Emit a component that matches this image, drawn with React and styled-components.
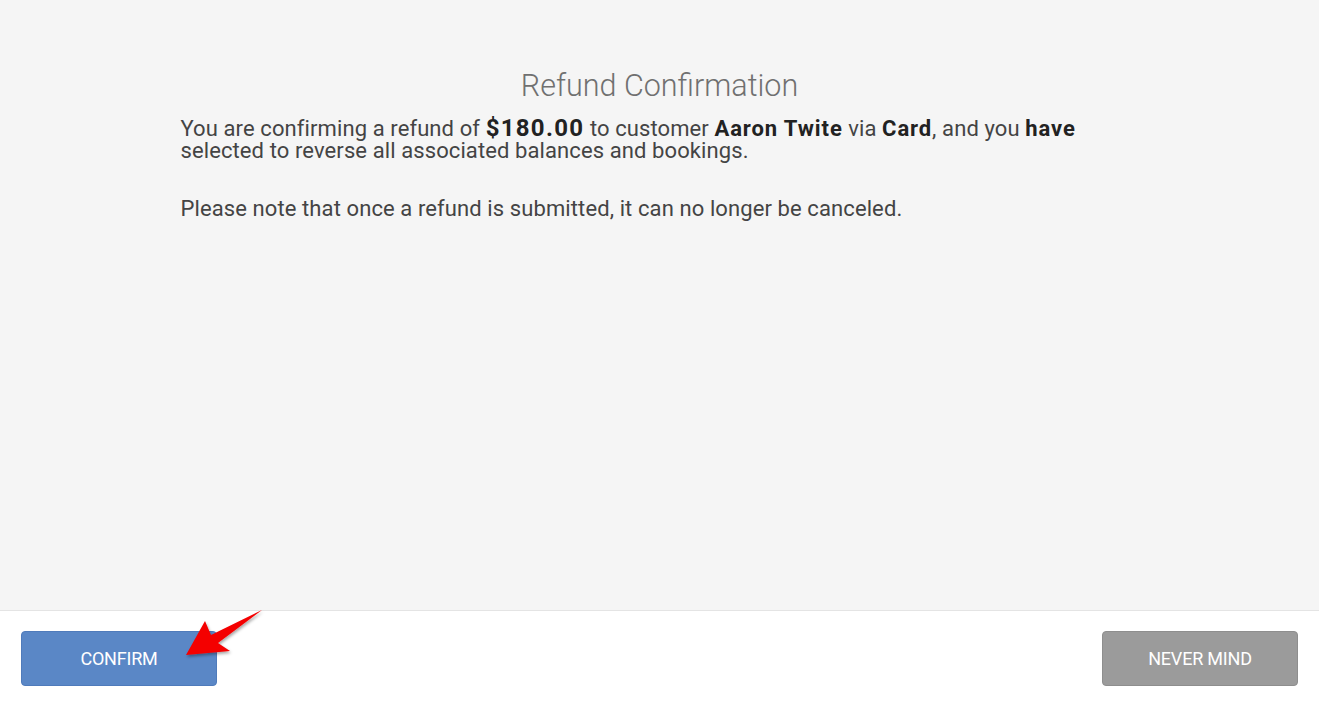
import React from "react";
import styled, { createGlobalStyle } from "styled-components";

const GlobalStyle = createGlobalStyle`
  html, body {
    margin: 0;
    padding: 0;
    background: #fff;
  }
  body {
    font-family: Roboto, "Liberation Sans", sans-serif;
  }
`;

const App = () => {
    const handleConfirm = () => {};
    const handleCancel = () => {};

    return (
        <>
            <GlobalStyle />
            <Page>
                <Body>
                    <Content>
                        <Title>Refund Confirmation</Title>
                        <Paragraph>
                            You are confirming a refund of <Amount>$180.00</Amount> to customer{" "}
                            <strong>Aaron Twite</strong> via <strong>Card</strong>, and you{" "}
                            <strong>have</strong> selected to reverse all associated balances and bookings.
                        </Paragraph>
                        <Paragraph>
                            Please note that once a refund is submitted, it can no longer be canceled.
                        </Paragraph>
                    </Content>
                </Body>
                <Footer>
                    <Button $variant="primary" onClick={handleConfirm}>
                        Confirm
                    </Button>
                    <Button $variant="muted" onClick={handleCancel}>
                        Never Mind
                    </Button>
                    <Arrow width="90" height="60" viewBox="0 0 90 60">
                        <defs>
                            <filter id="arrowShadow" x="-20%" y="-20%" width="140%" height="140%">
                                <feDropShadow dx="1" dy="2" stdDeviation="1.5" floodColor="#000" floodOpacity="0.35" />
                            </filter>
                        </defs>
                        <polygon
                            points="6,45 25,11 31,25 82,0 38,33 50,41"
                            fill="#f40000"
                            filter="url(#arrowShadow)"
                        />
                    </Arrow>
                </Footer>
            </Page>
        </>
    );
};

export default App;

const Page = styled.div`
  display: flex;
  flex-direction: column;
  height: 100vh;
`;

const Body = styled.div`
  flex: 1;
  background: #f5f5f5;
  border-bottom: 1px solid #e4e4e4;
  padding-top: 68px;
`;

const Content = styled.div`
  width: 958px;
  margin: 0 auto;
  color: #444;
`;

const Title = styled.h2`
  font-size: 30.5px;
  font-weight: 300;
  color: #707070;
  text-align: center;
  line-height: 36px;
  margin: 0 0 13px 0;
`;

const Paragraph = styled.p`
  font-size: 22px;
  line-height: 22px;
  letter-spacing: 0.1px;
  margin: 0 0 36px 0;

  strong {
    color: #222;
    font-weight: 700;
    letter-spacing: 0.9px;
  }
`;

const Amount = styled.strong`
  font-size: 24px;
  && {
    letter-spacing: 1.3px;
  }
`;

const Footer = styled.div`
  position: relative;
  height: 92px;
  box-sizing: border-box;
  padding: 20px 21px 0 21px;
  display: flex;
  justify-content: space-between;
  align-items: flex-start;
  background: #fff;
`;

const Button = styled.button`
  width: 196px;
  height: 55px;
  border-radius: 4px;
  border: 1px solid ${({ $variant }) => ($variant === "primary" ? "#4f7bbb" : "#8e8e8e")};
  background: ${({ $variant }) => ($variant === "primary" ? "#5a87c6" : "#9b9b9b")};
  color: #fff;
  font-family: Roboto, "Liberation Sans", sans-serif;
  font-size: 18px;
  letter-spacing: -0.2px;
  text-transform: uppercase;
  cursor: pointer;
`;

const Arrow = styled.svg`
  position: absolute;
  left: 180px;
  top: -1px;
  pointer-events: none;
`;
